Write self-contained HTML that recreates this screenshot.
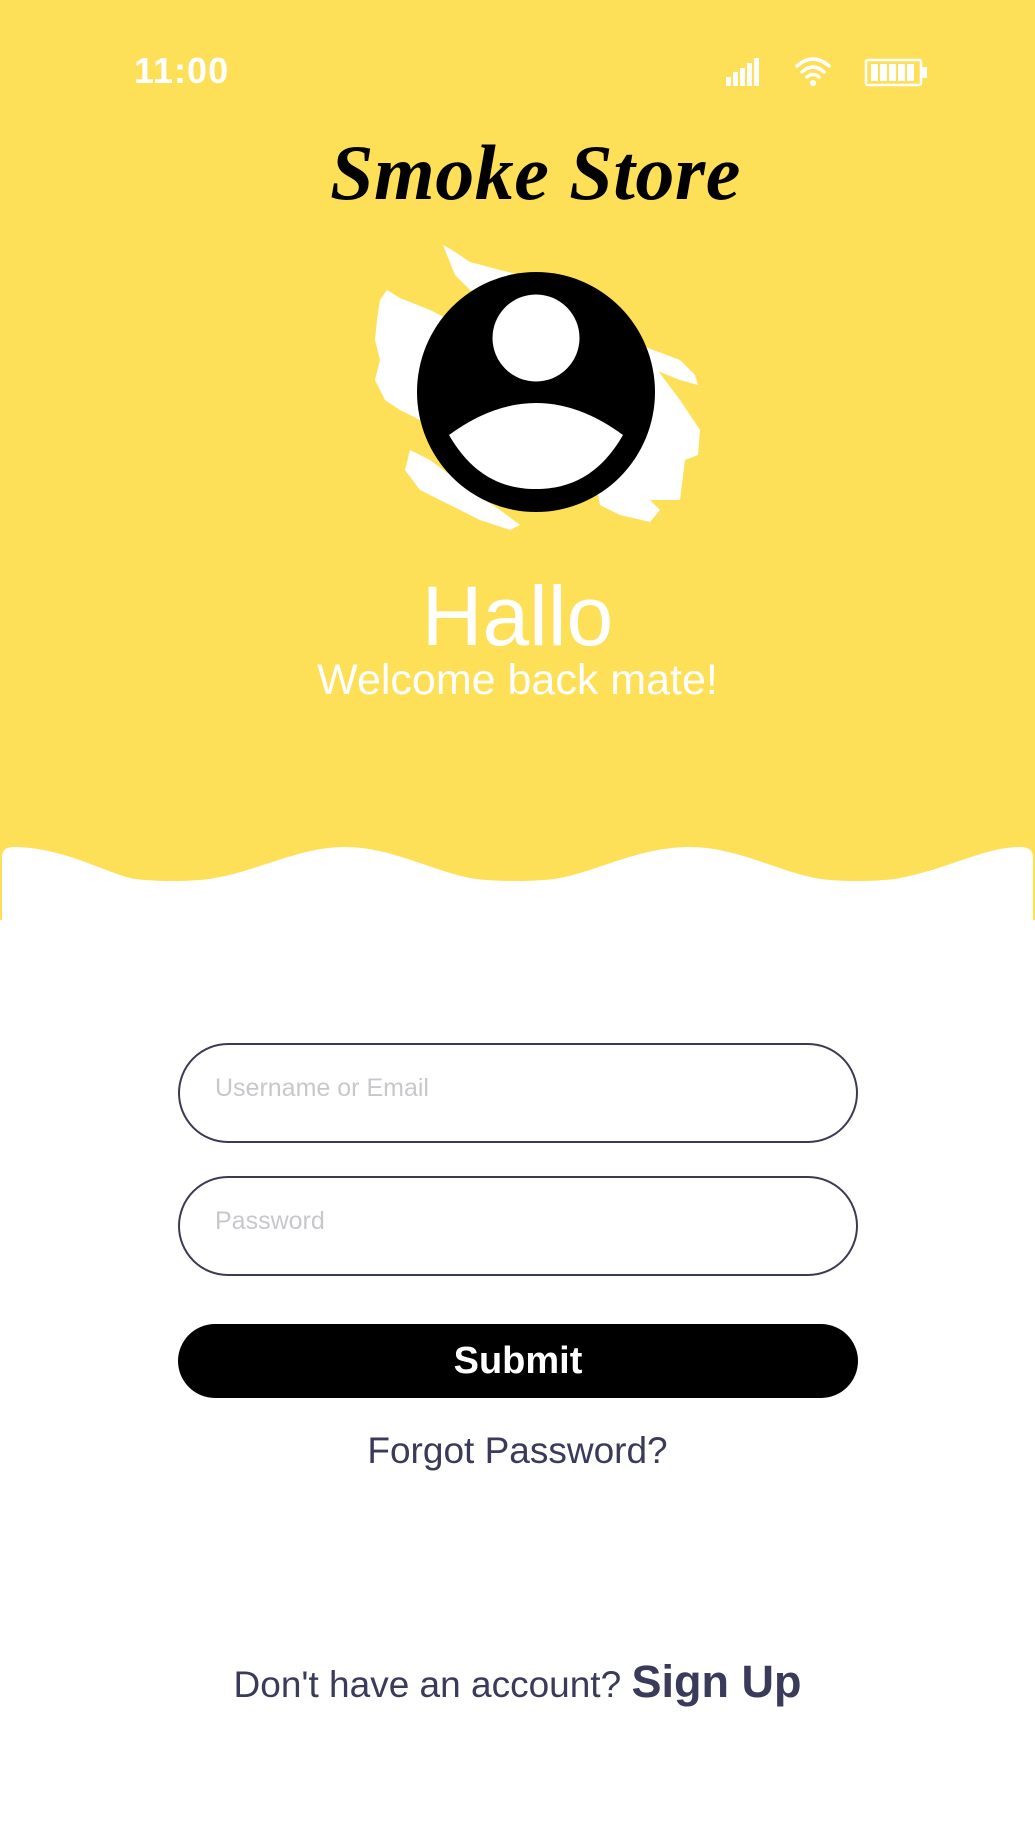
<!DOCTYPE html>
<html><head><meta charset="utf-8">
<style>
html,body{margin:0;padding:0;}
body{width:1035px;height:1840px;position:relative;background:#fff;overflow:hidden;font-family:"Liberation Sans",sans-serif;}
.abs{position:absolute;}
.time{left:134px;top:50px;font-size:36px;font-weight:bold;color:#fff;letter-spacing:1px;}
.title{left:18px;width:1035px;top:128px;text-align:center;font-family:"Liberation Serif",serif;font-style:italic;font-weight:bold;font-size:78px;letter-spacing:0.5px;color:#000;}
.hallo{left:0;width:1035px;top:568px;text-align:center;font-size:84px;color:#fff;}
.welcome{left:0;width:1035px;top:656px;text-align:center;font-size:43px;color:#fff;}
.inp{left:178px;width:676px;height:96px;border:2px solid #3a3a55;border-radius:50px;box-sizing:content-box;}
.ph{position:absolute;left:35px;top:29px;font-size:25px;color:#c8c8cc;}
.btn{left:178px;top:1324px;width:680px;height:74px;background:#000;border-radius:37px;color:#fff;font-weight:bold;font-size:38px;text-align:center;line-height:74px;}
.forgot{left:0;width:1035px;top:1430px;text-align:center;font-size:37px;color:#3a3a5a;}
.bottom{left:0;width:1035px;top:1656px;text-align:center;font-size:37px;color:#3a3a5a;}
.bottom b{font-size:45px;}
</style></head><body>
<svg class="abs" style="left:0;top:0" width="1035" height="1840" viewBox="0 0 1035 1840">
<rect x="0" y="0" width="1035" height="920" fill="#FEDF58"/>
<path d="M2,920 V857 Q2,847 14,847 C60,847 100,870 130,878 C150,882 195,882 215,878 C260,870 300,847 345,847 C390,847 430,870 470,878 C490,882 540,882 560,878 C600,870 640,847 690,847 C735,847 775,870 815,878 C835,882 880,882 900,878 C945,870 985,847 1020,847 Q1033,847 1033,857 V920 Z" fill="#fff"/>
<g fill="#fff">
<rect x="726" y="77" width="5" height="9"/><rect x="733" y="72" width="5" height="14"/><rect x="740" y="68" width="5" height="18"/><rect x="747" y="63" width="5" height="23"/><rect x="754" y="58" width="5" height="28"/>
<circle cx="813" cy="83" r="3"/>
</g>
<g fill="none" stroke="#fff" stroke-width="3.5" stroke-linecap="round">
<path d="M797,66 Q813,52 829,66"/><path d="M802,72 Q813,62 824,72"/><path d="M807,77 Q813,72 819,77"/>
<rect x="866" y="60" width="55" height="25" rx="2" stroke-width="2.5"/>
</g>
<g fill="#fff"><rect x="871" y="64" width="7" height="17"/><rect x="880" y="64" width="7" height="17"/><rect x="889" y="64" width="7" height="17"/><rect x="898" y="64" width="7" height="17"/><rect x="907" y="64" width="7" height="17"/><rect x="922" y="67" width="5" height="11"/></g>
<g fill="#fff">
<polygon points="443,245 452,250 470,262 500,270 520,275 560,300 600,330 640,345 680,360 695,375 698,385 680,380 650,368 630,360 610,350 570,330 530,310 500,300 470,290 455,275"/>
<polygon points="387,290 400,298 430,310 470,330 480,360 470,400 460,440 440,430 420,420 400,410 385,400 375,380 380,360 375,340 377,320 380,300"/>
<polygon points="610,345 650,360 680,400 700,430 698,455 685,460 680,500 660,500 620,500 600,470 610,420"/>
<polygon points="410,450 430,460 470,490 500,510 520,525 510,530 480,520 450,505 420,490 405,470"/>
<polygon points="595,480 640,490 660,510 650,522 620,515 600,505"/>
</g>
<ellipse cx="536" cy="392" rx="119" ry="120" fill="#000"/>
<circle cx="536" cy="338" r="43.5" fill="#fff"/>
<path d="M449,435 Q536,371 623,435 C600,475 570,489 536,489 C502,489 472,475 449,435 Z" fill="#fff"/>
</svg>
<div class="abs time">11:00</div>
<div class="abs title">Smoke Store</div>
<div class="abs hallo">Hallo</div>
<div class="abs welcome">Welcome back mate!</div>
<div class="abs inp" style="top:1043px"><span class="ph">Username or Email</span></div>
<div class="abs inp" style="top:1176px"><span class="ph">Password</span></div>
<div class="abs btn">Submit</div>
<div class="abs forgot">Forgot Password?</div>
<div class="abs bottom">Don't have an account? <b>Sign Up</b></div>
</body></html>
